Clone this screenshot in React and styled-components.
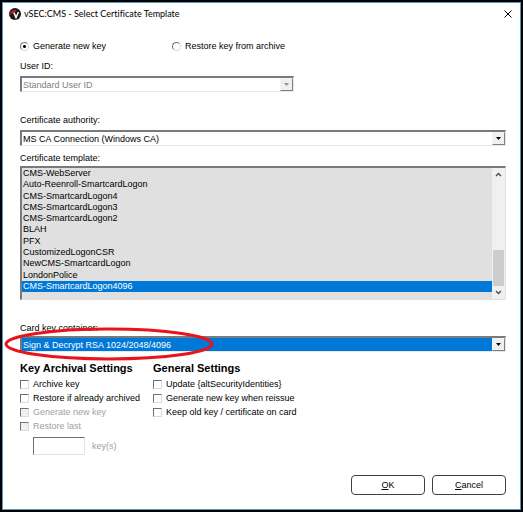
import React, {useState} from 'react';
import styled, {createGlobalStyle} from 'styled-components';

const GlobalStyle = createGlobalStyle`
  * {
    box-sizing: border-box;
  }

  body {
    margin: 0;
    background: #000000;
    font-family: "Liberation Sans", Arial, sans-serif;
    font-size: 9px;
    line-height: 12px;
    color: #000000;
  }

  input, select, button {
    font: inherit;
    color: inherit;
    margin: 0;
  }
`;

const Frame = styled.div`
  display: flex;
  min-height: 100vh;
  padding: 2px;
  background: #000000;
`;

const Dialog = styled.form`
  flex: 1;
  min-width: 0;
  border: 1px solid #4a9cc7;
  background: #ffffff;
`;

const TitleBar = styled.header`
  display: flex;
  align-items: center;
  height: 22px;
  padding: 0 6px;
  gap: 3px;
`;

const Title = styled.h1`
  flex: 1;
  margin: 0;
  font-family: Lato, "Open Sans", sans-serif;
  font-size: 9px;
  font-weight: 400;
  font-variant-ligatures: none;
  line-height: 14px;
`;

const CloseButton = styled.button`
  display: flex;
  padding: 2px;
  border: 0;
  background: none;
`;

const Body = styled.div`
  padding: 15px 14px 14px 17px;
`;

const RadioRow = styled.div`
  display: grid;
  grid-template-columns: 152px 1fr;
`;

const Choice = styled.label`
  display: flex;
  align-items: center;
  gap: 4px;
  height: ${({$height}) => $height || 14}px;
  color: ${({$disabled}) => ($disabled ? '#a0a0a0' : 'inherit')};
  white-space: nowrap;
`;

const Radio = styled.input`
  appearance: none;
  width: 9px;
  height: 9px;
  border: 1px solid;
  border-color: #707070 #d8d8d8 #d8d8d8 #707070;
  border-radius: 50%;
  background: #ffffff;

  &:checked {
    background: radial-gradient(circle, #000000 0 1px, #ffffff 2px);
  }
`;

const Checkbox = styled.input`
  appearance: none;
  width: 9px;
  height: 9px;
  border: 1px solid;
  border-color: #707070 #dcdcdc #dcdcdc #707070;
  background: #ffffff;

  &:checked {
    background: #0078d7;
  }

  &:disabled {
    background: #f0f0f0;
  }
`;

const Field = styled.div`
  display: flex;
  flex-direction: column;
  gap: ${({$gap}) => $gap || 4}px;
  margin-top: ${({$top}) => $top}px;
  width: ${({$width}) => $width || '100%'};
`;

const Label = styled.label`
  line-height: 12px;
`;

const Combo = styled.div`
  position: relative;
  display: flex;
`;

const Select = styled.select`
  appearance: none;
  width: 100%;
  height: 16px;
  padding: 0 16px 0 1px;
  border: 2px solid;
  border-color: #7a7a7a #e8e8e8 #e8e8e8 #7a7a7a;
  border-right-width: 1px;
  border-bottom-width: 1px;
  border-radius: 0;
  outline: none;
  background: ${({$selected}) => ($selected ? '#0078d7' : '#ffffff')};
  color: ${({$selected}) => ($selected ? '#ffffff' : '#000000')};

  &:disabled {
    color: #808080;
    opacity: 1;
  }
`;

const DropArrow = styled.span`
  position: absolute;
  top: 2px;
  right: 1px;
  bottom: 1px;
  display: flex;
  align-items: center;
  justify-content: center;
  width: 13px;
  border: 1px solid;
  border-color: #f4f4f4 #808080 #808080 #f4f4f4;
  background: #f0f0f0;
  color: ${({$disabled}) => ($disabled ? '#909090' : '#000000')};
  pointer-events: none;
`;

const ListBox = styled.div`
  display: flex;
  height: 134px;
  border: 1px solid #e0e0e0;
  border-top: 2px solid #7a7a7a;
  border-left: 2px solid #7a7a7a;
  background: #e0e0e0;
`;

const Options = styled.ul`
  flex: 1;
  display: grid;
  grid-template-rows: repeat(11, 1fr);
  margin: 0;
  padding: 0 0 7px;
  list-style: none;
`;

const Option = styled.li`
  display: flex;
  align-items: center;
  min-height: 0;
  padding-left: 1px;
  line-height: 11px;
  background: ${({$selected}) => ($selected ? '#0078d7' : 'transparent')};
  color: ${({$selected}) => ($selected ? '#ffffff' : 'inherit')};
`;

const ScrollBar = styled.div`
  display: flex;
  flex-direction: column;
  align-items: center;
  width: 13px;
  background: #f0f0f0;
`;

const ScrollArrow = styled.span`
  display: flex;
  align-items: center;
  justify-content: center;
  height: 13px;
`;

const ScrollTrack = styled.div`
  flex: 1;
  display: flex;
  align-items: flex-end;
  width: 11px;
`;

const ScrollThumb = styled.div`
  width: 100%;
  height: 36px;
  background: #cdcdcd;
`;

const Settings = styled.div`
  display: grid;
  grid-template-columns: 133px 1fr;
  margin-top: 9px;
`;

const SettingsTitle = styled.h2`
  margin: 0 0 2px;
  font-size: 11px;
  font-weight: 700;
  line-height: 14px;
  white-space: nowrap;
`;

const KeyCount = styled.div`
  display: flex;
  align-items: center;
  gap: 7px;
  margin: 4px 0 0 13px;
  color: #a0a0a0;
`;

const CountInput = styled.input`
  width: 52px;
  height: 18px;
  padding: 0 2px;
  border: 1px solid;
  border-color: #707070 #e4e4e4 #e4e4e4 #707070;
  background: #ffffff;
`;

const Actions = styled.footer`
  display: flex;
  justify-content: flex-end;
  gap: 7px;
  margin-top: 20px;
`;

const Button = styled.button`
  width: 74px;
  height: 20px;
  padding: 0;
  border: 1px solid #404040;
  border-radius: 4px;
  background: #ffffff;
`;

// red marker drawn over the card key container field
const Highlight = styled.svg`
  position: absolute;
  top: -10px;
  left: -16px;
  overflow: visible;
  pointer-events: none;
`;

const templates = [
    'CMS-WebServer',
    'Auto-Reenroll-SmartcardLogon',
    'CMS-SmartcardLogon4',
    'CMS-SmartcardLogon3',
    'CMS-SmartcardLogon2',
    'BLAH',
    'PFX',
    'CustomizedLogonCSR',
    'NewCMS-SmartcardLogon',
    'LondonPolice',
    'CMS-SmartcardLogon4096',
];

const Logo = () => (
    <svg width="12" height="12" viewBox="0 0 24 24" aria-hidden="true">
        <circle cx="12" cy="12" r="12" fill="#1c1416"/>
        <path d="M2 13C3 6 8 3 15 4L14 7C9 6 5 8 4 14z" fill="#d8202c"/>
        <path d="M4 9h4l5 9" fill="none" stroke="#d8202c" strokeWidth="2"/>
        <path d="M10 9l4 10 5-11" fill="none" stroke="#ffffff" strokeWidth="3"/>
    </svg>
);

const Chevron = ({down}) => (
    <svg width="7" height="5" viewBox="0 0 7 5" aria-hidden="true">
        <path d={down ? 'M1 1l2.500 2.500L6 1' : 'M1 4l2.500-2.500L6 4'} fill="none" stroke="#505050" strokeWidth="1.500"/>
    </svg>
);

const ComboBox = ({id, value, disabled, selected, children}) => (
    <Combo>
        <Select id={id} disabled={disabled} $selected={selected}>
            <option>{value}</option>
        </Select>
        <DropArrow $disabled={disabled}>
            <svg width="5" height="3" viewBox="0 0 5 3" aria-hidden="true">
                <path d="M0 0h5L2.500 3z" fill="currentColor"/>
            </svg>
        </DropArrow>
        {children}
    </Combo>
);

const Check = ({label, disabled}) => (
    <Choice $disabled={disabled}>
        <Checkbox type="checkbox" disabled={disabled}/>
        {label}
    </Choice>
);

const App = () => {
    const [template, setTemplate] = useState('CMS-SmartcardLogon4096');

    return (
        <Frame>
            <GlobalStyle/>
            <Dialog onSubmit={(e) => e.preventDefault()}>
                <TitleBar>
                    <Logo/>
                    <Title>vSEC:CMS - Select Certificate Template</Title>
                    <CloseButton type="button" aria-label="Close">
                        <svg width="8" height="8" viewBox="0 0 8 8">
                            <path d="M0.500 0.500l7 7M7.500 0.500l-7 7" stroke="#000000"/>
                        </svg>
                    </CloseButton>
                </TitleBar>
                <Body>
                    <RadioRow>
                        <Choice $height={12}>
                            <Radio type="radio" name="source" defaultChecked/>
                            Generate new key
                        </Choice>
                        <Choice $height={12}>
                            <Radio type="radio" name="source"/>
                            Restore key from archive
                        </Choice>
                    </RadioRow>
                    <Field $top={8} $width="274px">
                        <Label htmlFor="user">User ID:</Label>
                        <ComboBox id="user" value="Standard User ID" disabled/>
                    </Field>
                    <Field $top={22}>
                        <Label htmlFor="authority">Certificate authority:</Label>
                        <ComboBox id="authority" value="MS CA Connection (Windows CA)"/>
                    </Field>
                    <Field $top={6} $gap={2}>
                        <Label as="span" id="template-label">Certificate template:</Label>
                        <ListBox>
                            <Options role="listbox" aria-labelledby="template-label" tabIndex={-1}>
                                {templates.map((name) => (
                                    <Option
                                        key={name}
                                        role="option"
                                        aria-selected={name === template}
                                        $selected={name === template}
                                        onClick={() => setTemplate(name)}
                                    >
                                        {name}
                                    </Option>
                                ))}
                            </Options>
                            <ScrollBar>
                                <ScrollArrow><Chevron/></ScrollArrow>
                                <ScrollTrack><ScrollThumb/></ScrollTrack>
                                <ScrollArrow><Chevron down/></ScrollArrow>
                            </ScrollBar>
                        </ListBox>
                    </Field>
                    <Field $top={22} $gap={2}>
                        <Label htmlFor="container">Card key container:</Label>
                        <ComboBox id="container" value="Sign &amp; Decrypt RSA 1024/2048/4096" selected>
                            <Highlight width="210" height="36" viewBox="0 0 210 36" aria-hidden="true">
                                <ellipse cx="105" cy="18" rx="103" ry="15" fill="none" stroke="#e8141c" strokeWidth="3"/>
                            </Highlight>
                        </ComboBox>
                    </Field>
                    <Settings>
                        <div>
                            <SettingsTitle>Key Archival Settings</SettingsTitle>
                            <Check label="Archive key"/>
                            <Check label="Restore if already archived"/>
                            <Check label="Generate new key" disabled/>
                            <Check label="Restore last" disabled/>
                            <KeyCount>
                                <CountInput id="count" type="text" disabled/>
                                <Label htmlFor="count">key(s)</Label>
                            </KeyCount>
                        </div>
                        <div>
                            <SettingsTitle>General Settings</SettingsTitle>
                            <Check label="Update {altSecurityIdentities}"/>
                            <Check label="Generate new key when reissue"/>
                            <Check label="Keep old key / certificate on card"/>
                        </div>
                    </Settings>
                    <Actions>
                        <Button type="submit"><u>O</u>K</Button>
                        <Button type="button"><u>C</u>ancel</Button>
                    </Actions>
                </Body>
            </Dialog>
        </Frame>
    );
};

export default App;
